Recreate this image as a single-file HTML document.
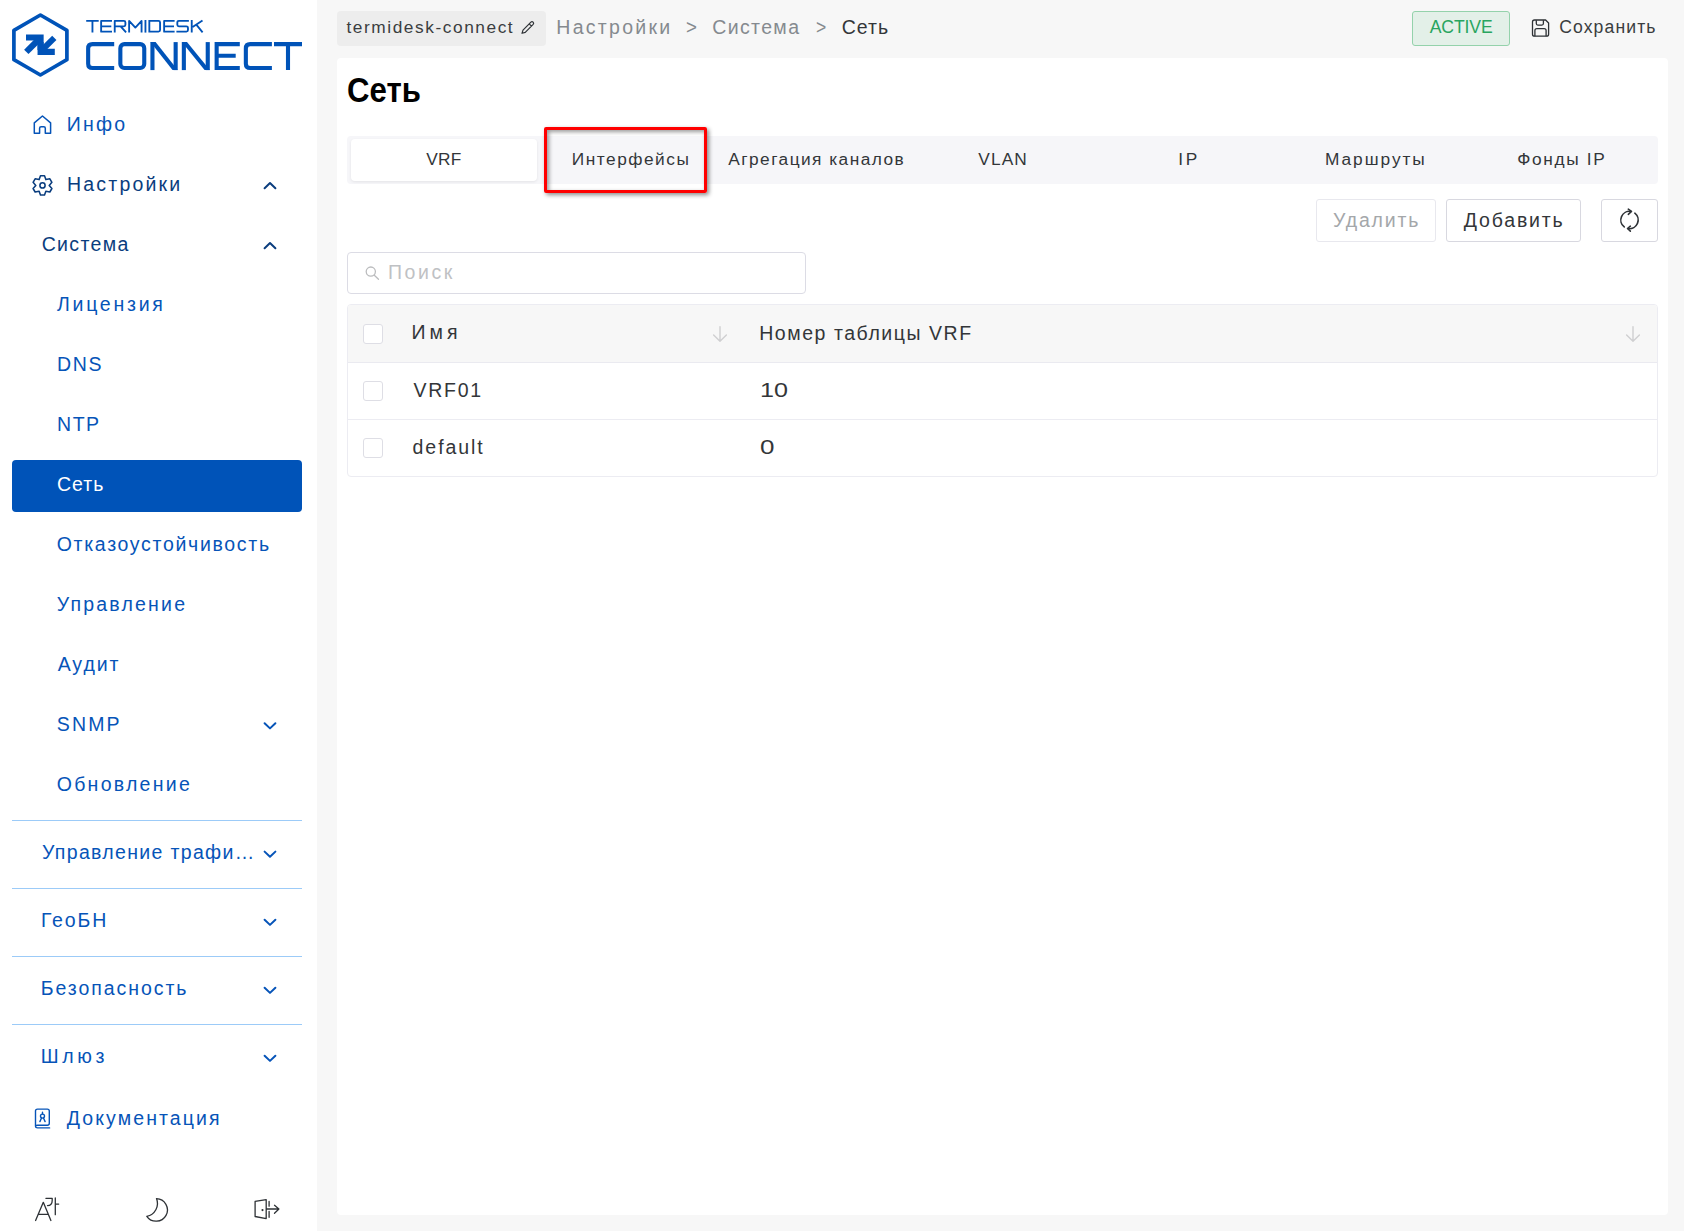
<!DOCTYPE html>
<html><head><meta charset="utf-8">
<style>
html,body{margin:0;padding:0;}
body{width:1684px;height:1231px;overflow:hidden;position:relative;background:#f7f7f7;font-family:"Liberation Sans",sans-serif;}
.abs{position:absolute;left:0;top:0;}
.t{position:absolute;white-space:nowrap;line-height:1;font-family:"Liberation Sans",sans-serif;}
.box{position:absolute;box-sizing:border-box;}
</style></head><body>
<div class="box" style="left:0;top:0;width:317px;height:1231px;background:#fff"></div>
<div class="box" style="left:337px;top:58px;width:1331px;height:1157px;background:#fff;border-radius:4px"></div>
<div class="box" style="left:337px;top:11px;width:209px;height:35px;background:#ededed;border-radius:4px"></div>
<div class="box" style="left:1412px;top:11px;width:98px;height:35px;background:#e3f0e8;border:1px solid #94d2ab;border-radius:3px"></div>
<div class="box" style="left:347px;top:136px;width:1311px;height:48px;background:#f6f6f9;border-radius:4px"></div>
<div class="box" style="left:351px;top:139px;width:186px;height:42px;background:#fff;border-radius:4px;box-shadow:0 1px 3px rgba(0,0,0,0.08)"></div>
<div class="box" style="left:1316px;top:199px;width:120px;height:43px;background:#fff;border:1px solid #e8e8ee;border-radius:3px"></div>
<div class="box" style="left:1446px;top:199px;width:135px;height:43px;background:#fff;border:1px solid #d8d8e0;border-radius:3px"></div>
<div class="box" style="left:1601px;top:199px;width:57px;height:43px;background:#fff;border:1px solid #d8d8e0;border-radius:3px"></div>
<div class="box" style="left:347px;top:252px;width:459px;height:42px;background:#fff;border:1px solid #dcdce5;border-radius:4px"></div>
<div class="box" style="left:347px;top:304px;width:1311px;height:173px;background:#fff;border:1px solid #ececf2;border-radius:4px;overflow:hidden">
  <div class="box" style="left:0;top:0;width:100%;height:58px;background:#f7f7f7;border-bottom:1px solid #eaeaf0"></div>
  <div class="box" style="left:0;top:114px;width:100%;height:1px;background:#ececf2"></div>
</div>
<div class="box" style="left:363px;top:324px;width:20px;height:20px;background:#fff;border:1px solid #dedee5;border-radius:3px"></div>
<div class="box" style="left:363px;top:381px;width:20px;height:20px;background:#fff;border:1px solid #dedee5;border-radius:3px"></div>
<div class="box" style="left:363px;top:438px;width:20px;height:20px;background:#fff;border:1px solid #dedee5;border-radius:3px"></div>
<svg class="abs" width="317" height="1231" viewBox="0 0 317 1231">
<!-- logo hexagon -->
<polygon points="40.4,15 66.9,30.3 66.9,59.7 40.4,75 13.9,59.7 13.9,30.3" fill="none" stroke="#0053b8" stroke-width="3.7" stroke-linejoin="round"/>
<path d="M26 37.5 H40.6 V50" fill="none" stroke="#0053b8" stroke-width="6.1" stroke-linejoin="miter"/>
<line x1="26.3" y1="51.9" x2="40.0" y2="38.2" stroke="#0053b8" stroke-width="6.2"/>
<path d="M40.6 42 V51.9 H54.8" fill="none" stroke="#0053b8" stroke-width="6.1" stroke-linejoin="miter"/>
<line x1="54.3" y1="37.8" x2="41.2" y2="50.9" stroke="#0053b8" stroke-width="6.0"/>
<!-- CONNECT -->
<g fill="none" stroke="#0053b8" stroke-width="4.1">
<path d="M114.2 44.15 H92.5 Q88.15 44.15 88.15 48.5 V63.7 Q88.15 68.05 92.5 68.05 H114.2"/>
<rect x="120.35" y="44.15" width="23.9" height="23.9" rx="4"/>
</g><g fill="#0053b8">
<rect x="150.4" y="42.1" width="4.1" height="28"/><rect x="173.6" y="42.1" width="4.1" height="28"/>
<rect x="181.8" y="42.1" width="4.1" height="28"/><rect x="205.7" y="42.1" width="4.1" height="28"/>
</g><g fill="none" stroke="#0053b8" stroke-width="4.1">
<path d="M239.8 44.15 H216.65 V68.05 H239.8 M216.65 55.75 H235.7"/>
<path d="M271.9 44.15 H250.2 Q245.85 44.15 245.85 48.5 V63.7 Q245.85 68.05 250.2 68.05 H271.9"/>
<path d="M274 44.15 H302 M288 44.15 V70.1"/>
</g>
<polygon points="150.4,42.1 155.6,42.1 177.7,70.1 172.5,70.1" fill="#0053b8"/>
<polygon points="181.8,42.1 187,42.1 209.8,70.1 204.6,70.1" fill="#0053b8"/>
<g fill="none" stroke="#0053b8" stroke-width="1.85" stroke-linejoin="round">
<path d="M86.2 20.93 H98.7 M92.45 20.93 V32.6"/>
<path d="M112 20.93 H101.13 V31.67 H112 M101.13 26.3 H111.3"/>
<path d="M114.73 32.6 V20.93 H123.9 Q125.4 20.93 125.4 22.43 V24.8 Q125.4 26.3 123.9 26.3 H114.73 M120.6 26.3 L126.1 32.3"/>
<path d="M129.13 32.6 V20.93 L135.35 27.6 L141.57 20.93 V32.6"/>
<path d="M145.45 20 V32.6"/>
<path d="M149.33 20 V32.6 M149.33 20.93 H158.5 Q160.07 20.93 160.07 22.5 V30.1 Q160.07 31.67 158.5 31.67 H149.33"/>
<path d="M174.6 20.93 H164.13 V31.67 H174.6 M164.13 26.3 H174"/>
<path d="M188.9 20.93 H178.9 Q177.33 20.93 177.33 22.5 V24.73 Q177.33 26.3 178.9 26.3 H186.4 Q187.97 26.3 187.97 27.87 V30.1 Q187.97 31.67 186.4 31.67 H176.4"/>
<path d="M191.73 20 V32.6 M202.5 20.4 L192.6 27.1 M196.3 24.6 L202.6 32.3"/>
</g>
<!-- home icon -->
<path d="M34.3 133.3 V122.8 L42.45 116 L50.6 122.8 V133.3 H45.3 V128.2 Q45.3 126.7 43.8 126.7 H41.1 Q39.6 126.7 39.6 128.2 V133.3 Z" fill="none" stroke="#0654b8" stroke-width="1.5" stroke-linejoin="round"/>
<polygon points="40.48,175.71 44.52,175.71 45.85,179.60 49.88,178.80 51.90,182.31 49.20,185.40 51.90,188.49 49.88,192.00 45.85,191.20 44.52,195.09 40.48,195.09 39.15,191.20 35.12,192.00 33.10,188.49 35.80,185.40 33.10,182.31 35.12,178.80 39.15,179.60" fill="none" stroke="#0a3d7e" stroke-width="1.55" stroke-linejoin="round"/><circle cx="42.5" cy="185.4" r="2.6" fill="none" stroke="#0a3d7e" stroke-width="1.55"/>
<polyline points="264.6,188.2 270,183 275.4,188.2" fill="none" stroke="#0a3d7e" stroke-width="2" stroke-linecap="round" stroke-linejoin="round"/>
<polyline points="264.6,248.2 270,243 275.4,248.2" fill="none" stroke="#0a3d7e" stroke-width="2" stroke-linecap="round" stroke-linejoin="round"/>
<rect x="12" y="460" width="290" height="52" rx="4" fill="#0053b8"/>
<polyline points="264.6,723.2 270,728.4000000000001 275.4,723.2" fill="none" stroke="#0654b8" stroke-width="2" stroke-linecap="round" stroke-linejoin="round"/>
<rect x="12" y="820" width="290" height="1" fill="#9ccbf8"/>
<polyline points="264.6,851.6 270,856.8000000000001 275.4,851.6" fill="none" stroke="#0654b8" stroke-width="2" stroke-linecap="round" stroke-linejoin="round"/>
<rect x="12" y="888" width="290" height="1" fill="#9ccbf8"/>
<polyline points="264.6,919.7 270,924.9000000000001 275.4,919.7" fill="none" stroke="#0654b8" stroke-width="2" stroke-linecap="round" stroke-linejoin="round"/>
<rect x="12" y="956" width="290" height="1" fill="#9ccbf8"/>
<polyline points="264.6,987.7 270,992.9000000000001 275.4,987.7" fill="none" stroke="#0654b8" stroke-width="2" stroke-linecap="round" stroke-linejoin="round"/>
<rect x="12" y="1024" width="290" height="1" fill="#9ccbf8"/>
<polyline points="264.6,1055.7 270,1060.9 275.4,1055.7" fill="none" stroke="#0654b8" stroke-width="2" stroke-linecap="round" stroke-linejoin="round"/>
<!-- doc icon -->
<g fill="none" stroke="#0654b8" stroke-width="1.4" stroke-linecap="round" stroke-linejoin="round">
<path d="M35.5 1126 V1111.1 Q35.5 1109.1 37.5 1109.1 H47.3 Q49.3 1109.1 49.3 1111.1 V1123.2 Q49.3 1125.2 47.3 1125.2 H37.5 Q35.5 1125.2 35.5 1126.6 Q35.5 1127.9 37.5 1127.9 H49.6"/>
<path d="M42.5 1112.2 V1113.9 M41.4 1118.2 L39.9 1121.6 M43.6 1118.2 L45.1 1121.6"/>
<circle cx="42.5" cy="1116.1" r="2"/>
</g>
<!-- bottom icons -->
<g fill="none" stroke="#2e3236" stroke-width="1.3" stroke-linecap="round" stroke-linejoin="round">
<path d="M35.6 1220.5 L43.3 1202.3 L50.9 1220.5 M38.7 1214.4 H47.5"/>
<path d="M45.9 1198.3 H52.2 V1200.5 Q52.2 1205.6 47.5 1205.6 M55.3 1198 V1214.7 M55.3 1204.1 H58.7"/>
<path d="M156.5 1198.6 A11.3 11.3 0 1 1 146.8 1216.3 A13 13 0 0 0 156.5 1198.6 Z"/>
<path d="M255.1 1201.4 L266.2 1199.6 V1218.6 L255.1 1216.5 Z M269.1 1201.4 V1206.2 M269.1 1211.4 V1217.3 M266.2 1209 H278.9 M274.5 1205.3 L278.9 1209 L274.5 1213.2"/>
</g>
<circle cx="262.5" cy="1210.1" r="1.1" fill="#2e3236"/>
</svg>
<svg class="abs" width="1684" height="1231" viewBox="0 0 1684 1231" style="left:0;top:0">
<!-- pencil -->
<g fill="none" stroke="#2e3236" stroke-width="1.2" stroke-linejoin="round">
<path d="M522 33.3 L522.99 30.05 L530.91 22.13 A1.6 1.6 0 0 1 533.17 24.39 L525.25 32.31 Z M529.21 23.83 L531.47 26.09"/>
</g>
<!-- save -->
<g fill="none" stroke="#2e3236" stroke-width="1.3" stroke-linejoin="round">
<path d="M1534.5 20 H1545.6 L1548.6 23 V34.2 Q1548.6 36.2 1546.6 36.2 H1534.5 Q1532.5 36.2 1532.5 34.2 V22 Q1532.5 20 1534.5 20 Z"/>
<path d="M1536.3 20.3 V23.6 Q1536.3 25.1 1537.8 25.1 H1541.9 Q1543.4 25.1 1543.4 23.6 V20.3"/>
<path d="M1534.9 36.2 V30.6 Q1534.9 28.6 1536.9 28.6 H1544.1 Q1546.1 28.6 1546.1 30.6 V36.2"/>
</g>
<!-- search icon -->
<g fill="none" stroke="#bbbcbe" stroke-width="1.3" stroke-linecap="round">
<circle cx="370.8" cy="271.6" r="4.6"/>
<path d="M374.3 275.3 L378.5 279.3"/>
</g>
<!-- refresh -->
<g fill="none" stroke="#2e3236" stroke-width="1.6" stroke-linecap="round" stroke-linejoin="round">
<path d="M1624.24 226.96 A8.7 8.7 0 0 1 1630.9 211.45"/>
<path d="M1628.3 209.2 L1631.5 211.4 L1628.3 214.3"/>
<path d="M1634.84 213.15 A8.7 8.7 0 0 1 1628.3 228.6"/>
<path d="M1630.35 226.2 L1627.5 228.5 L1630.35 231.2"/>
</g>
<!-- sort arrows -->
<g fill="none" stroke="#cfcfd1" stroke-width="1.4" stroke-linecap="round" stroke-linejoin="round">
<path d="M720 326.8 V341 M713.6 334.9 L720 341.2 L726.4 334.9"/>
<path d="M1633 326.8 V341 M1626.6 334.9 L1633 341.2 L1639.4 334.9"/>
</g>
</svg>
<div class="box" style="left:544px;top:127px;width:163px;height:66px;border:3px solid #ff0000;border-radius:2px;box-shadow:2px 2px 4px rgba(0,0,0,0.45), inset 2px 2px 4px rgba(0,0,0,0.4)"></div>
<span class="t" style="left:66.8px;top:115.0px;font-size:19.5px;color:#0654b8;letter-spacing:2.20px;">Инфо</span><span class="t" style="left:67.0px;top:175.0px;font-size:19.5px;color:#0a3d7e;letter-spacing:2.20px;">Настройки</span><span class="t" style="left:41.7px;top:235.0px;font-size:19.5px;color:#0a3d7e;letter-spacing:1.35px;">Система</span><span class="t" style="left:57.0px;top:295.0px;font-size:19.5px;color:#0654b8;letter-spacing:2.74px;">Лицензия</span><span class="t" style="left:57.0px;top:355.0px;font-size:19.5px;color:#0654b8;letter-spacing:1.65px;">DNS</span><span class="t" style="left:57.0px;top:415.0px;font-size:19.5px;color:#0654b8;letter-spacing:1.55px;">NTP</span><span class="t" style="left:57.0px;top:475.0px;font-size:19.5px;color:#ffffff;letter-spacing:1.00px;">Сеть</span><span class="t" style="left:56.7px;top:535.0px;font-size:19.5px;color:#0654b8;letter-spacing:1.69px;">Отказоустойчивость</span><span class="t" style="left:56.7px;top:595.0px;font-size:19.5px;color:#0654b8;letter-spacing:2.21px;">Управление</span><span class="t" style="left:57.7px;top:655.0px;font-size:19.5px;color:#0654b8;letter-spacing:1.90px;">Аудит</span><span class="t" style="left:56.7px;top:715.0px;font-size:19.5px;color:#0654b8;letter-spacing:2.20px;">SNMP</span><span class="t" style="left:56.7px;top:775.0px;font-size:19.5px;color:#0654b8;letter-spacing:2.28px;">Обновление</span><span class="t" style="left:42.0px;top:843.0px;font-size:19.5px;color:#0654b8;letter-spacing:1.33px;">Управление трафи…</span><span class="t" style="left:41.0px;top:911.0px;font-size:19.5px;color:#0654b8;letter-spacing:1.85px;">ГеоБН</span><span class="t" style="left:40.8px;top:979.0px;font-size:19.5px;color:#0654b8;letter-spacing:1.93px;">Безопасность</span><span class="t" style="left:40.8px;top:1047.0px;font-size:19.5px;color:#0654b8;letter-spacing:3.57px;">Шлюз</span><span class="t" style="left:66.8px;top:1108.6px;font-size:19.5px;color:#0654b8;letter-spacing:2.09px;">Документация</span><span class="t" style="left:346.5px;top:18.8px;font-size:17.3px;color:#3a3d40;letter-spacing:1.56px;">termidesk-connect</span><span class="t" style="left:556.3px;top:18.0px;font-size:19.5px;color:#858a8f;letter-spacing:2.28px;">Настройки</span><span class="t" style="left:686.0px;top:18.0px;font-size:19.5px;color:#858a8f;transform:scaleX(0.960);transform-origin:0 0;">></span><span class="t" style="left:712.2px;top:18.0px;font-size:19.5px;color:#858a8f;letter-spacing:1.38px;">Система</span><span class="t" style="left:816.1px;top:18.0px;font-size:19.5px;color:#858a8f;transform:scaleX(0.900);transform-origin:0 0;">></span><span class="t" style="left:841.7px;top:18.0px;font-size:19.5px;color:#333639;letter-spacing:1.03px;">Сеть</span><span class="t" style="left:1429.7px;top:19.1px;font-size:17.6px;color:#28a55f;letter-spacing:-0.10px;">ACTIVE</span><span class="t" style="left:1559.2px;top:19.1px;font-size:17.6px;color:#3a3d40;letter-spacing:1.11px;">Сохранить</span><span class="t" style="left:347.4px;top:71.5px;font-size:35px;color:#000000;font-weight:700;transform:scaleX(0.891);transform-origin:0 0;">Сеть</span><span class="t" style="left:426.2px;top:151.0px;font-size:17.3px;color:#333639;letter-spacing:0.30px;">VRF</span><span class="t" style="left:571.8px;top:151.0px;font-size:17.3px;color:#333639;letter-spacing:1.51px;">Интерфейсы</span><span class="t" style="left:728.3px;top:151.0px;font-size:17.3px;color:#333639;letter-spacing:1.46px;">Агрегация каналов</span><span class="t" style="left:978.2px;top:151.0px;font-size:17.3px;color:#333639;letter-spacing:1.17px;">VLAN</span><span class="t" style="left:1178.3px;top:151.0px;font-size:17.3px;color:#333639;letter-spacing:2.70px;">IP</span><span class="t" style="left:1325.0px;top:151.0px;font-size:17.3px;color:#333639;letter-spacing:1.96px;">Маршруты</span><span class="t" style="left:1517.2px;top:151.0px;font-size:17.3px;color:#333639;letter-spacing:1.67px;">Фонды IP</span><span class="t" style="left:1333.0px;top:211.4px;font-size:19.5px;color:#a4a7aa;letter-spacing:1.83px;">Удалить</span><span class="t" style="left:1463.7px;top:211.4px;font-size:19.5px;color:#333639;letter-spacing:1.84px;">Добавить</span><span class="t" style="left:388.0px;top:263.0px;font-size:19.5px;color:#bfc1c4;letter-spacing:2.55px;">Поиск</span><span class="t" style="left:411.6px;top:323.3px;font-size:19.5px;color:#333639;letter-spacing:3.95px;">Имя</span><span class="t" style="left:759.2px;top:323.5px;font-size:19.5px;color:#333639;letter-spacing:1.55px;">Номер таблицы VRF</span><span class="t" style="left:413.6px;top:381.0px;font-size:19.5px;color:#333639;letter-spacing:1.70px;">VRF01</span><span class="t" style="left:759.7px;top:381.0px;font-size:19.5px;color:#333639;transform:scaleX(1.290);transform-origin:0 0;">10</span><span class="t" style="left:412.6px;top:438.0px;font-size:19.5px;color:#333639;letter-spacing:1.93px;">default</span><span class="t" style="left:759.7px;top:438.0px;font-size:19.5px;color:#333639;transform:scaleX(1.333);transform-origin:0 0;">0</span>
</body></html>
